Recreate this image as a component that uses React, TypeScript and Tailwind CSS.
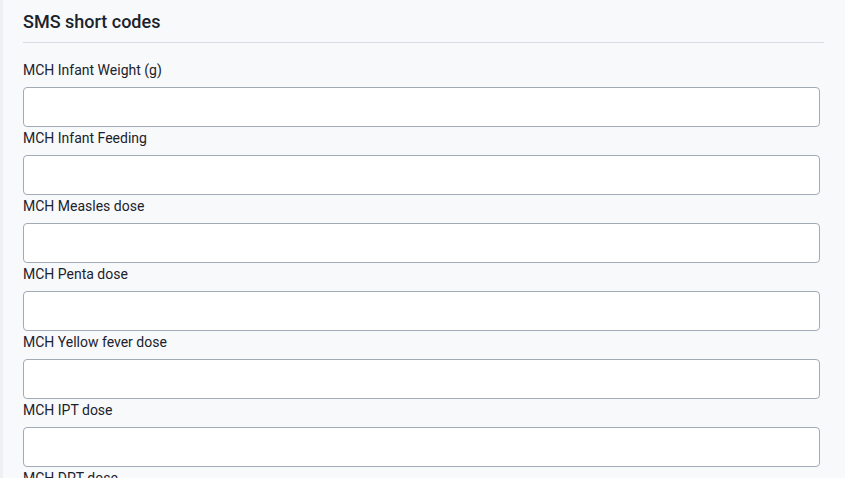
import React from "react";

const fields = [
  "MCH Infant Weight (g)",
  "MCH Infant Feeding",
  "MCH Measles dose",
  "MCH Penta dose",
  "MCH Yellow fever dose",
  "MCH IPT dose",
  "MCH DPT dose",
];

export default function App() {
  return (
    <div className="flex h-[478px] overflow-hidden bg-[#f8f9fb]" style={{ fontFamily: "Roboto, 'Liberation Sans', sans-serif" }}>
      <div className="w-[3px] shrink-0 bg-[#eef0f3]" />
      <div className="flex-1 pl-[20px] pr-[21px]">
        <h2 className="mt-[11px] text-[18px] font-medium leading-[22px] text-[#1b222b]">SMS short codes</h2>
        <div className="mt-[9px] h-px bg-[#d5dce3]" />
        <div className="mt-[16px] flex flex-col">
          {fields.map((f) => (
            <div key={f} className="flex flex-col">
              <label className="pt-[1px] text-[14px] leading-[21px] text-[#1b222b]">{f}</label>
              <input className="mt-[6px] mr-[4px] h-[40px] rounded-[4px] border border-[#a0abb6] bg-white" />
            </div>
          ))}
        </div>
      </div>
    </div>
  );
}
